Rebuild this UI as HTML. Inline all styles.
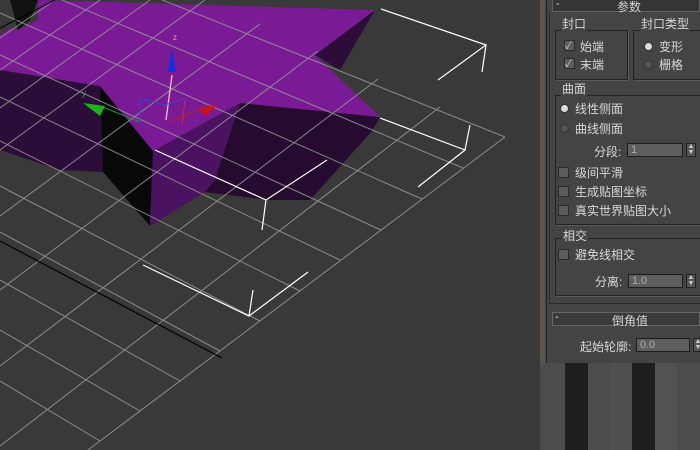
<!DOCTYPE html>
<html><head><meta charset="utf-8"><style>
*{margin:0;padding:0;box-sizing:border-box}
body{width:700px;height:450px;overflow:hidden;background:#393939;position:relative;font-family:"Liberation Sans","Noto Sans CJK SC",sans-serif;font-size:12px;color:#d8d8d8}
.a{position:absolute;white-space:nowrap}
.box{position:absolute;border:1px solid #222;box-shadow:1px 1px 0 #5a5a5a}
.lbl{position:absolute;background:#444;padding:0 1px;line-height:13px}
.cb{position:absolute;width:11px;height:11px;background:#5c5c5c;border:1px solid #2a2a2a}
.rd{position:absolute;width:9px;height:9px;border-radius:50%;background:#555;border:1px solid #333}
.inp{position:absolute;height:14px;background:#5e5e5e;border:1px solid #1c1c1c;color:#aaa;font-size:11px;line-height:12px;padding-left:3px}
.sp{position:absolute;width:10px;height:14px;background:#555;border:1px solid #222;font-size:7px;line-height:6px;text-align:center;color:#ccc}
</style></head><body>
<svg class="a" style="left:0;top:0" width="540" height="450" viewBox="0 0 540 450">
<rect width="540" height="450" fill="#393939"/>
<polygon points="0,70 100,86 103,172 60,170 0,150" fill="#2c0c38"/>
<polygon points="100,86 153,151 150,226 103,172" fill="#080808"/>
<polygon points="153,151 240,103 215,180 205,192 150,226" fill="#4a1260"/>
<polygon points="240,103 380,117 372,131 310,200 269,200 205,192 215,180" fill="#260a30"/>
<polygon points="315,55 375,10 340,70" fill="#2e0c3a"/>
<polygon points="10,0 38,0 30,20 18,30" fill="#111"/>
<polygon points="0,35 10,28 18,30 38,20 38,0 375,10 315,55 380,117 240,103 153,151 100,86 0,70" fill="#7a1a95"/>
<g stroke="#9a9a9a" stroke-width="1" fill="none" opacity="0.85">
<line x1="0" y1="-65" x2="505" y2="137"/><line x1="0" y1="-26" x2="463" y2="168"/>
<line x1="0" y1="13" x2="422" y2="199"/><line x1="0" y1="55" x2="381" y2="230"/>
<line x1="0" y1="97" x2="340" y2="260"/><line x1="0" y1="141" x2="300" y2="291"/>
<line x1="0" y1="186" x2="260" y2="321"/><line x1="0" y1="232" x2="220" y2="351"/>
<line x1="0" y1="280" x2="180" y2="381"/><line x1="0" y1="330" x2="140" y2="411"/>
<line x1="0" y1="381" x2="100" y2="441"/>
<line x1="505" y1="137" x2="88" y2="450"/><line x1="440" y1="107" x2="0" y2="446"/>
<line x1="378" y1="79" x2="0" y2="366"/><line x1="318" y1="51" x2="0" y2="290"/>
<line x1="260" y1="24" x2="0" y2="216"/><line x1="205" y1="0" x2="0" y2="150"/>
<line x1="150" y1="0" x2="0" y2="108"/><line x1="100" y1="0" x2="0" y2="70"/><line x1="55" y1="0" x2="0" y2="38"/>
</g>
<line x1="0" y1="241" x2="222" y2="358" stroke="#000" stroke-width="1.2"/>
<line x1="0" y1="28" x2="55" y2="0" stroke="#000"/>
<g stroke="#fff" stroke-width="1.2" fill="none">
<polyline points="381,9 486,45 438,80"/><line x1="486" y1="45" x2="482" y2="72"/>
<polyline points="380,118 465,150 418,187"/><line x1="465" y1="150" x2="470" y2="125"/>
<polyline points="155,150 266,200 327,160"/><line x1="266" y1="200" x2="262" y2="230"/>
<polyline points="143,265 249,316 308,272"/><line x1="249" y1="316" x2="253" y2="290"/>
</g>
<line x1="166" y1="120" x2="172" y2="75" stroke="#f0c0c0" stroke-width="1.3"/>
<polygon points="172,48 168,72 176,72" fill="#1030e0"/>
<text x="173" y="40" fill="#f5a080" font-size="8">z</text>
<line x1="100" y1="106" x2="140" y2="122" stroke="#1a9a1a"/>
<polygon points="83,103 105,106 100,116" fill="#20b020"/>
<text x="82" y="96" fill="#30b030" font-size="8">y</text>
<line x1="170" y1="122" x2="210" y2="105" stroke="#c02020"/>
<polygon points="200,110 218,104 206,116" fill="#d01010"/>
<g stroke="#3048d0" fill="none"><polyline points="140,98 165,105 185,98"/><line x1="140" y1="98" x2="140" y2="125"/></g>
<g stroke="#c03040" fill="none"><line x1="185" y1="100" x2="182" y2="125"/></g>
</svg>
<div class="a" style="left:540px;top:0;width:160px;height:450px;background:#444"></div>
<div class="a" style="left:540px;top:0;width:5px;height:450px;background:#5c5648"></div>
<div class="a" style="left:546px;top:0;width:1px;height:450px;background:#222"></div>
<div class="a" style="left:552px;top:0;width:148px;height:12px;background:#353535;border:1px solid #606060;border-top:none"></div>
<div class="a" style="left:556px;top:-2px;font-size:11px">-</div>
<div class="a" style="left:617px;top:-2px">参数</div>
<div class="a" style="left:549px;top:13px;width:1px;height:290px;background:#2c2c2c"></div>
<div class="box" style="left:555px;top:30px;width:73px;height:50px"></div>
<div class="lbl" style="left:561px;top:18px">封口</div>
<div class="box" style="left:633px;top:30px;width:70px;height:50px"></div>
<div class="lbl" style="left:640px;top:18px">封口类型</div>
<div class="cb" style="left:564px;top:40px"></div><div class="a" style="left:565px;top:37px;font-size:10px;color:#ccc">✓</div>
<div class="a" style="left:580px;top:38px">始端</div>
<div class="cb" style="left:564px;top:58px"></div><div class="a" style="left:565px;top:55px;font-size:10px;color:#ccc">✓</div>
<div class="a" style="left:580px;top:56px">末端</div>
<div class="rd" style="left:644px;top:42px;background:#ddd"></div><div class="a" style="left:659px;top:38px">变形</div>
<div class="rd" style="left:644px;top:60px"></div><div class="a" style="left:659px;top:56px">栅格</div>
<div class="box" style="left:555px;top:95px;width:150px;height:130px;border-right:none"></div>
<div class="lbl" style="left:561px;top:83px">曲面</div>
<div class="rd" style="left:560px;top:104px;background:#ddd"></div><div class="a" style="left:575px;top:100px">线性侧面</div>
<div class="rd" style="left:560px;top:124px"></div><div class="a" style="left:575px;top:120px">曲线侧面</div>
<div class="a" style="left:594px;top:143px">分段:</div>
<div class="inp" style="left:627px;top:143px;width:56px">1</div>
<div class="sp" style="left:686px;top:143px">▲<br>▼</div>
<div class="cb" style="left:558px;top:167px"></div><div class="a" style="left:575px;top:164px">级间平滑</div>
<div class="cb" style="left:558px;top:186px"></div><div class="a" style="left:575px;top:183px">生成贴图坐标</div>
<div class="cb" style="left:558px;top:205px"></div><div class="a" style="left:575px;top:202px">真实世界贴图大小</div>
<div class="box" style="left:555px;top:238px;width:150px;height:58px;border-right:none"></div>
<div class="lbl" style="left:562px;top:230px">相交</div>
<div class="cb" style="left:558px;top:249px"></div><div class="a" style="left:575px;top:246px">避免线相交</div>
<div class="a" style="left:595px;top:273px">分离:</div>
<div class="inp" style="left:628px;top:274px;width:55px">1.0</div>
<div class="sp" style="left:686px;top:274px">▲<br>▼</div>
<div class="a" style="left:549px;top:303px;width:151px;height:1px;background:#2a2a2a"></div>
<div class="a" style="left:552px;top:312px;width:148px;height:14px;background:#3a3a3a;border:1px solid #666"></div>
<div class="a" style="left:555px;top:311px;font-size:11px">-</div>
<div class="a" style="left:612px;top:312px">倒角值</div>
<div class="a" style="left:580px;top:338px">起始轮廓:</div>
<div class="inp" style="left:636px;top:338px;width:54px">0.0</div>
<div class="sp" style="left:693px;top:338px">▲<br>▼</div>
<div class="a" style="left:540px;top:363px;width:160px;height:87px;background:#4c4c4c"></div>
<div class="a" style="left:565px;top:363px;width:23px;height:87px;background:#1e1e1e"></div>
<div class="a" style="left:610px;top:363px;width:22px;height:87px;background:#505050"></div>
<div class="a" style="left:632px;top:363px;width:23px;height:87px;background:#1e1e1e"></div>
<div class="a" style="left:655px;top:363px;width:22px;height:87px;background:#535353"></div>
</body></html>
